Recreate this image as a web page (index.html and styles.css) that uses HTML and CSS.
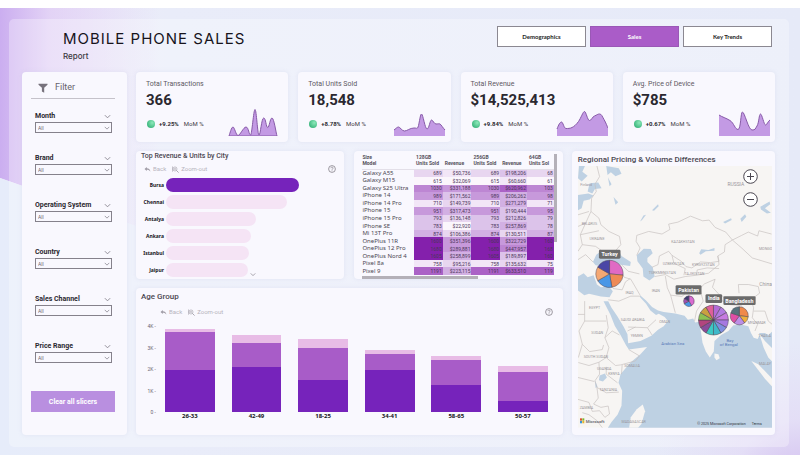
FILE: index.html
```html
<!DOCTYPE html>
<html lang="en">
<head>
<meta charset="utf-8">
<title>Mobile Phone Sales Report</title>
<link rel="stylesheet" href="styles.css">
</head>
<body>
<svg class="defs" width="0" height="0" aria-hidden="true">
  <defs>
    <symbol id="chev" viewBox="0 0 8 5"><path d="M1 1l3 3 3-3" fill="none" stroke="currentColor" stroke-width="1"/></symbol>
    <symbol id="back" viewBox="0 0 8 8"><path d="M3.2 1L.6 3.4l2.6 2.4V4.3c2 0 3.2.5 4 2.4 0-2.700-1.500-4.200-4-4.200z" fill="currentColor"/></symbol>
    <symbol id="zoomout" viewBox="0 0 8 8"><path d="M5 5l2.500 2.500M2 3.400h2.600" stroke="currentColor" fill="none"/><circle cx="3.400" cy="3.400" r="2.300" fill="none" stroke="currentColor" stroke-width=".7"/><path d="M.5 .5v6" stroke="currentColor" stroke-width=".7"/></symbol>
    <symbol id="help" viewBox="0 0 8 8"><circle cx="4" cy="4" r="3.400" fill="none" stroke="currentColor" stroke-width=".8"/><path d="M2.900 3.200c0-1.500 2.300-1.400 2.200 0C5 4 4 3.900 4 4.800M4 5.400v.8" fill="none" stroke="currentColor" stroke-width=".7"/></symbol>
    <radialGradient id="dot" cx=".65" cy=".35" r=".8"><stop offset="0" stop-color="#8ce8b9"/><stop offset="1" stop-color="#2fae74"/></radialGradient>
    <symbol id="orb" viewBox="0 0 8 8"><circle cx="4" cy="4" r="4" fill="url(#dot)"/></symbol>
    <path id="wedge" d="M0 0V-45A45 45 0 0 1 22.500 -38.970Z"/>
  </defs>
</svg>
<main class="canvas">
  <div class="panel">
    <header class="top">
      <div>
        <h1>MOBILE PHONE SALES</h1>
        <p class="subtitle">Report</p>
      </div>
      <nav class="tabs">
        <button type="button">Demographics</button>
        <button type="button" class="active">Sales</button>
        <button type="button">Key Trends</button>
      </nav>
    </header>

    <div class="layout">
      <aside class="card sidebar">
        <div class="filter-head">
          <h2><svg viewBox="0 0 10 10" aria-hidden="true"><path d="M.5 .7h9v1L6.200 4.800V9.800L3.900 8.400V4.800L.5 1.700z" fill="#77727c"/></svg>Filter</h2>
          <div class="field">
            <label for="month">Month</label><svg class="chev"><use href="#chev"/></svg>
            <div class="select"><select id="month"><option>All</option></select><svg class="chev"><use href="#chev"/></svg></div>
          </div>
        </div>
        <div class="fields">
          <div class="field">
            <label for="brand">Brand</label><svg class="chev"><use href="#chev"/></svg>
            <div class="select"><select id="brand"><option>All</option></select><svg class="chev"><use href="#chev"/></svg></div>
          </div>
          <div class="field">
            <label for="os">Operating System</label><svg class="chev"><use href="#chev"/></svg>
            <div class="select"><select id="os"><option>All</option></select><svg class="chev"><use href="#chev"/></svg></div>
          </div>
          <div class="field">
            <label for="country">Country</label><svg class="chev"><use href="#chev"/></svg>
            <div class="select"><select id="country"><option>All</option></select><svg class="chev"><use href="#chev"/></svg></div>
          </div>
          <div class="field">
            <label for="channel">Sales Channel</label><svg class="chev"><use href="#chev"/></svg>
            <div class="select"><select id="channel"><option>All</option></select><svg class="chev"><use href="#chev"/></svg></div>
          </div>
          <div class="field">
            <label for="price">Price Range</label><svg class="chev"><use href="#chev"/></svg>
            <div class="select"><select id="price"><option>All</option></select><svg class="chev"><use href="#chev"/></svg></div>
          </div>
        </div>
        <button type="button" class="clear">Clear all slicers</button>
      </aside>

      <div class="content">
        <section class="kpis">
          <article class="card kpi">
            <h3>Total Transactions</h3><strong>366</strong>
            <p><svg class="orb"><use href="#orb"/></svg><b>+9.25%</b><span>MoM %</span></p>
            <svg class="spark" viewBox="0 0 56 28"><path d="M2 28C3 25 4.500 19 6 19S9 27.500 11 27.500S16.500 19 19 19S22 27 23.500 27S26.500 1.500 28 1.500S30.500 27 32 27S34.500 10 36.700 10S39 19.500 40.700 19.500S43 10 45 10S49 25 50 28Z"/></svg>
          </article>
          <article class="card kpi">
            <h3>Total Units Sold</h3><strong>18,548</strong>
            <p><svg class="orb"><use href="#orb"/></svg><b>+8.78%</b><span>MoM %</span></p>
            <svg class="spark" viewBox="0 0 56 28"><path class="fill" d="M4 22C5.500 21 7 19 8.500 19S12 23 14.500 23S20 20 24 20S26 21 27.500 20S30 6 31.500 6S35 21 37 21S40 12 41.500 12S44 16 46 16S49 15.500 50 16S53 20 55 22V28H4Z"/><path class="line" d="M4 22C5.500 21 7 19 8.500 19S12 23 14.500 23S20 20 24 20S26 21 27.500 20S30 6 31.500 6S35 21 37 21S40 12 41.500 12S44 16 46 16S49 15.500 50 16S53 20 55 22"/></svg>
          </article>
          <article class="card kpi">
            <h3>Total Revenue</h3><strong>$14,525,413</strong>
            <p><svg class="orb"><use href="#orb"/></svg><b>+9.84%</b><span>MoM %</span></p>
            <svg class="spark" viewBox="0 0 56 28"><path class="fill" d="M5 21C6.500 17 8 14 9.500 14S12 20.500 14 20.500S18 20.500 20 19.500S24 17 26.500 13.500S31 3.500 32.500 3.500S35.500 12.500 37.500 12.500S40 9 42.500 8S45.500 6 47.500 6S50 8 52 11.500S55 18 56 20V28H5Z"/><path class="line" d="M5 21C6.500 17 8 14 9.500 14S12 20.500 14 20.500S18 20.500 20 19.500S24 17 26.500 13.500S31 3.500 32.500 3.500S35.500 12.500 37.500 12.500S40 9 42.500 8S45.500 6 47.500 6S50 8 52 11.500S55 18 56 20"/></svg>
          </article>
          <article class="card kpi">
            <h3>Avg. Price of Device</h3><strong>$785</strong>
            <p><svg class="orb"><use href="#orb"/></svg><b>+0.67%</b><span>MoM %</span></p>
            <svg class="spark" viewBox="0 0 56 28"><path class="fill" d="M5 7C8 9 12 10 16 12.500S21 21.500 24 21.500S26.500 4 28.500 4S34.500 22 38 22S41 21 43 18S45 6 46.500 6S50 17 51.500 17S54 13 56 12V28H5Z"/><path class="line" d="M5 7C8 9 12 10 16 12.500S21 21.500 24 21.500S26.500 4 28.500 4S34.500 22 38 22S41 21 43 18S45 6 46.500 6S50 17 51.500 17S54 13 56 12"/></svg>
          </article>
        </section>

        <div class="charts">
          <div class="left">
            <div class="pair">
              <section class="card city">
                <h3>Top Revenue &amp; Units by City</h3>
                <div class="tools"><button type="button"><svg><use href="#back"/></svg>Back</button><button type="button"><svg><use href="#zoomout"/></svg>Zoom-out</button><svg class="help"><use href="#help"/></svg></div>
                <ul class="bars">
                  <li><span>Bursa</span><div><i class="sel" style="width:78%"></i></div></li>
                  <li><span>Chennai</span><div><i style="width:71%"></i></div></li>
                  <li><span>Antalya</span><div><i style="width:53%"></i></div></li>
                  <li><span>Ankara</span><div><i style="width:50%"></i></div></li>
                  <li><span>Istanbul</span><div><i style="width:49%"></i></div></li>
                  <li><span>Jaipur</span><div><i style="width:48%"></i><svg class="chev"><use href="#chev"/></svg></div></li>
                </ul>
              </section>

              <section class="card matrix">
                <div class="clip">
                  <table>
                    <colgroup><col class="name"><col class="wide"><col class="wide"><col class="wide"><col class="slim"><col class="slim"></colgroup>
                    <thead><tr><th>Size<br>Model</th><th>128GB<br>Units Sold</th><th><br>Revenue</th><th>256GB<br>Units Sold</th><th><br>Revenue</th><th>64GB<br>Units Sol</th></tr></thead>
                    <tbody>
                      <tr><th>Galaxy A55</th><td class="l2">689</td><td class="l1">$50,736</td><td class="l2">689</td><td class="l3">$198,206</td><td class="l2">68</td></tr>
                      <tr><th>Galaxy M15</th><td class="l0">615</td><td class="l0">$32,069</td><td class="l0">615</td><td class="l1">$60,660</td><td class="l0">61</td></tr>
                      <tr><th>Galaxy S25 Ultra</th><td class="l6">1030</td><td class="l5">$331,188</td><td class="l6">1030</td><td class="l7">$620,962</td><td class="l6">103</td></tr>
                      <tr><th>iPhone 14</th><td class="l5">989</td><td class="l3">$171,562</td><td class="l5">989</td><td class="l4">$206,262</td><td class="l5">98</td></tr>
                      <tr><th>iPhone 14 Pro</th><td class="l1">710</td><td class="l2">$149,739</td><td class="l1">710</td><td class="l4">$271,279</td><td class="l1">71</td></tr>
                      <tr><th>iPhone 15</th><td class="l5">951</td><td class="l4">$317,473</td><td class="l5">951</td><td class="l3">$190,444</td><td class="l5">95</td></tr>
                      <tr><th>iPhone 15 Pro</th><td class="l3">793</td><td class="l2">$136,148</td><td class="l3">793</td><td class="l3">$212,826</td><td class="l3">79</td></tr>
                      <tr><th>iPhone SE</th><td class="l3">783</td><td class="l0">$22,920</td><td class="l3">783</td><td class="l4">$257,869</td><td class="l3">78</td></tr>
                      <tr><th>Mi 13T Pro</th><td class="l4">874</td><td class="l2">$106,386</td><td class="l4">874</td><td class="l2">$130,511</td><td class="l4">87</td></tr>
                      <tr><th>OnePlus 11R</th><td class="l8">1600</td><td class="l5">$351,396</td><td class="l8">1600</td><td class="l5">$322,729</td><td class="l8">160</td></tr>
                      <tr><th>OnePlus 12 Pro</th><td class="l8">1680</td><td class="l5">$289,881</td><td class="l8">1680</td><td class="l6">$447,957</td><td class="l8">168</td></tr>
                      <tr><th>OnePlus Nord 4</th><td class="l8">1605</td><td class="l4">$258,899</td><td class="l8">1605</td><td class="l3">$189,897</td><td class="l8">160</td></tr>
                      <tr><th>Pixel 8a</th><td class="l1">758</td><td class="l2">$95,216</td><td class="l1">758</td><td class="l2">$135,632</td><td class="l1">75</td></tr>
                      <tr><th>Pixel 9</th><td class="l7">1191</td><td class="l4">$223,115</td><td class="l7">1191</td><td class="l7">$633,510</td><td class="l7">119</td></tr>
                    </tbody>
                  </table>
                </div>
                <div class="vbar"></div>
                <div class="hbar"></div>
              </section>
            </div>

            <section class="card age">
              <h3>Age Group</h3>
              <div class="tools"><button type="button"><svg><use href="#back"/></svg>Back</button><button type="button"><svg><use href="#zoomout"/></svg>Zoom-out</button><svg class="help"><use href="#help"/></svg></div>
              <div class="plot">
                <div class="axis"><span>4K -</span><span>3K -</span><span>2K -</span><span>1K -</span><span>0 -</span></div>
                <div class="cols">
                  <div class="col"><div class="stack"><i class="c" style="height:3.500%"></i><i class="b" style="height:44%"></i><i class="a" style="height:49%"></i></div><span>26-33</span></div>
                  <div class="col"><div class="stack"><i class="c" style="height:10%"></i><i class="b" style="height:28%"></i><i class="a" style="height:52%"></i></div><span>42-49</span></div>
                  <div class="col"><div class="stack"><i class="c" style="height:10%"></i><i class="b" style="height:38%"></i><i class="a" style="height:37%"></i></div><span>18-25</span></div>
                  <div class="col"><div class="stack"><i class="c" style="height:5%"></i><i class="b" style="height:18%"></i><i class="a" style="height:49%"></i></div><span>34-41</span></div>
                  <div class="col"><div class="stack"><i class="c" style="height:5%"></i><i class="b" style="height:29%"></i><i class="a" style="height:31%"></i></div><span>58-65</span></div>
                  <div class="col"><div class="stack"><i class="c" style="height:7.500%"></i><i class="b" style="height:34%"></i><i class="a" style="height:12.500%"></i></div><span>50-57</span></div>
                </div>
              </div>
            </section>
          </div>

          <section class="card map">
            <h3>Regional Pricing &amp; Volume Differences</h3>
            <div class="mapbox">
              <svg viewBox="27 63 585 788" role="img" aria-label="Map of sales by country">
                <rect x="27" y="63" width="585" height="788" fill="#f7f5f3"/>
                <g fill="#bed1e3">
                  <path d="M117 851L128 834L146 812L158 785L160 740L149 716L155 690L185 655L215 630L235 608L180 616L172 604L155 572L138 545L125 512L104 470L118 470L128 490L145 515L165 548L176 570L178 597L215 590L248 574L268 556L285 546L298 530L288 518L270 508L262 512L245 498L232 478L214 458L214 452L232 468L250 488L268 498L285 503L320 507L348 514L358 526L374 522L380 534L392 532L397 560L402 595L412 622L424 640L436 622L438 590L458 572L480 560L495 543L520 541L540 546L548 566L556 580L568 584L574 572L580 590L586 610L600 640L612 652V851Z"/>
                  <path d="M572 566L590 590L612 612V562L600 572L590 566Z"/>
                  <path d="M204 332L225 312L246 313L252 326L236 340L236 352L252 368L258 396L242 408L224 396L222 372L206 350Z"/>
                  <path d="M72 352L82 330L98 318L110 328L128 320L150 318L158 334L186 352L184 364L150 360L110 366L80 362Z"/>
                  <path d="M27 396L44 386L56 398L74 392L84 420L96 428L120 426L132 440L122 458L96 456L60 448L46 452L27 438Z"/>
                  <path d="M30 63H48L40 80L56 92L38 110L27 100ZM112 63L150 70L158 86L140 94L126 82L116 90ZM62 115L88 113L98 130L78 132L70 146L56 140ZM117 97L128 118L122 124ZM134 156L148 172L140 180ZM27 150L58 146L74 152L62 164L44 168L38 190L27 196Z"/>
                  <path d="M392 326L398 314L420 316L438 310L438 318L412 320L396 330ZM214 230L224 212L232 210L220 226ZM250 196L268 178L270 184L256 198ZM464 232L488 220L490 226L470 236ZM516 222L530 208L534 216L520 232ZM576 186L604 170L606 178L590 190L608 204L596 206L578 194Z"/>
                  <path d="M92 694L108 688L114 700L102 712L90 708ZM78 708L86 728L80 732Z"/>
                </g>
                <g fill="#f7f5f3">
                  <path d="M181 851L186 820L204 796L222 781L229 802L218 840L208 851Z"/>
                  <path d="M438 628L450 630L454 642L444 648L438 640Z"/>
                  <path d="M549 650L570 660L612 704V728L590 704Z"/>
                </g>
                <g fill="none" stroke="#c6c0bd" stroke-width="2">
                  <path d="M84 63L92 95L78 118L82 140L68 160L66 200L90 220L96 240L120 260L152 275L156 300L140 318M27 210L60 200M27 245L50 235L66 200M50 235L34 270L40 300L27 320M34 270L90 258M40 300L80 305L98 318M27 345L50 330L72 352"/>
                  <path d="M204 332L214 310L202 290L204 272L240 260L280 268L304 254L300 238L328 232L366 214L402 228L422 226L440 248L472 262L492 286L470 300L468 322L448 334L452 350L426 354L396 352L370 370L352 366L338 350L310 332L300 320L272 334L268 360L250 368"/>
                  <path d="M492 286L520 272L540 262L568 274L572 258L610 268M492 286L520 310L552 340L612 358M258 396L290 390L316 404L350 396L384 392L420 386L452 360L448 334M310 332L316 356L350 372L346 392M384 392L386 376L416 370L452 372"/>
                  <path d="M158 360L178 380L212 388M150 372L166 398L186 404L214 452M132 432L160 436L170 412L184 402M118 466L150 470L186 455M186 455L215 455M290 394L296 430L306 452L320 505M306 452L340 456L366 434L394 432L408 418L440 404L432 428L452 450L480 464L520 470L548 466L574 446L570 426L540 420L510 420L512 446"/>
                  <path d="M394 432L404 470L384 500L378 530M452 450L462 470L480 480L520 484L526 510L516 540M548 466L556 490L552 520L568 540L560 560M556 500L590 500L600 530L612 540M178 548L236 550L262 526M236 550L250 572M176 560L200 548"/>
                  <path d="M47 470V530H112M47 510H27M47 530L30 560L40 600L28 640M112 512L118 550L108 580L120 610L112 640L140 664L156 662L200 650L212 635L180 616M108 580L130 560L152 572M40 600L62 622L100 616L104 602M28 655L60 664L90 654L112 640M90 654L92 690L78 710L84 730L112 746L150 744M112 668L112 690L146 716M84 730L88 762L74 780L96 790L118 786L122 810L108 820L92 800L70 802L60 775L27 766M60 812L84 830L100 851M60 812L40 806M160 662L158 690M27 700L76 712"/>
                </g>
                <g class="country">
                  <text x="477" y="123" class="big">RUSSIA</text><text x="34" y="122">Finland</text><text x="38" y="240">BELARUS</text><text x="62" y="285">UKRAINE</text>
                  <text x="308" y="295">KAZAKHSTAN</text><text x="572" y="315">MONGO</text><text x="282" y="360">UZBEKISTAN</text><text x="370" y="363">KYRGYZSTAN</text>
                  <text x="240" y="387">TURKMENISTAN</text><text x="348" y="390">TAJIKISTAN</text><text x="170" y="449">IRAQ</text><text x="249" y="444">IRAN</text><text x="573" y="425" class="big">China</text>
                  <text x="60" y="494">EGYPT</text><text x="156" y="529">SAUDI ARABIA</text><text x="272" y="535">OMAN</text><text x="67" y="569">SUDAN</text><text x="186" y="579">YEMEN</text>
                  <text x="44" y="642">SOUTH SUDAN</text><text x="166" y="668">SOMALIA</text><text x="84" y="678">UGANDA</text><text x="118" y="692">KENYA</text><text x="92" y="740">TANZANIA</text><text x="32" y="795">ZAMBIA</text>
                  <text x="158" y="838">MADAGASCAR</text><text x="570" y="577">THAILA</text><text x="572" y="663">MALAY</text><text x="538" y="539">MYANMAR</text>
                </g>
                <g class="sea"><text x="278" y="601">Arabian Sea</text><text x="474" y="593">Bay</text><text x="454" y="606">of Bengal</text></g>

                <g stroke="#4a4452" stroke-width="1.500">
                  <g transform="translate(122 388)">
                    <path fill="#e06ac4" d="M0 0V-41A41 41 0 0 1 40.800 3.600Z"/><path fill="#ef8a55" d="M0 0L40.800 3.600A41 41 0 0 1 7.100 40.400Z"/><path fill="#4a97e6" d="M0 0L7.100 40.400A41 41 0 0 1 -35.500 20.500Z"/><path fill="#f5a873" d="M0 0L-35.500 20.500A41 41 0 0 1 -35.500 -20.500Z"/><path fill="#4a47a6" d="M0 0L-35.500 -20.500A41 41 0 0 1 0 -41Z"/>
                  </g>
                  <g transform="translate(361 470)">
                    <path fill="#d86bd0" d="M0 0V-16A16 16 0 0 1 8 13.900Z"/><path fill="#4a97e6" d="M0 0L8 13.900A16 16 0 0 1 -13.900 8Z"/><path fill="#a04fb0" d="M0 0L-13.900 8A16 16 0 0 1 -13.900 -8Z"/><path fill="#3c3a70" d="M0 0L-13.900 -8A16 16 0 0 1 0 -16Z"/>
                  </g>
                  <g transform="translate(435 527)">
                    <use href="#wedge" fill="#b36bd6"/><use href="#wedge" fill="#b27be0" transform="rotate(30)"/><use href="#wedge" fill="#c77be0" transform="rotate(60)"/><use href="#wedge" fill="#a679e0" transform="rotate(90)"/><use href="#wedge" fill="#7f8fe0" transform="rotate(120)"/><use href="#wedge" fill="#3fb8c9" transform="rotate(150)"/><use href="#wedge" fill="#3cc9c4" transform="rotate(180)"/><use href="#wedge" fill="#8a4b9a" transform="rotate(210)"/><use href="#wedge" fill="#b3457e" transform="rotate(240)"/><use href="#wedge" fill="#8cc152" transform="rotate(270)"/><use href="#wedge" fill="#c9a040" transform="rotate(300)"/><use href="#wedge" fill="#e0609a" transform="rotate(330)"/>
                  </g>
                  <g transform="translate(513 514)">
                    <path fill="#f08a4b" d="M0 0V-27A27 27 0 0 1 26.800 3Z"/><path fill="#eeb03f" d="M0 0L26.800 3A27 27 0 0 1 15.900 21.800Z"/><path fill="#bd8fe6" d="M0 0L15.900 21.800A27 27 0 0 1 -15.900 21.800Z"/><path fill="#df4fa5" d="M0 0L-15.900 21.800A27 27 0 0 1 -25.700 -8.300Z"/><path fill="#56727c" d="M0 0L-25.700 -8.300A27 27 0 0 1 0 -27Z"/>
                  </g>
                </g>
                <g fill="#6b6b6b">
                  <rect x="90" y="315" width="65" height="27" rx="4"/><rect x="321" y="422" width="78" height="28" rx="4"/><rect x="411" y="449" width="50" height="27" rx="4"/><rect x="465" y="455" width="97" height="27" rx="4"/>
                </g>
                <g class="pin"><text x="122" y="335">Turkey</text><text x="360" y="442">Pakistan</text><text x="436" y="468">India</text><text x="513" y="475">Bangladesh</text></g>
                <g><rect x="33" y="823" width="6" height="7" fill="#d9532c"/><rect x="40" y="823" width="6" height="7" fill="#7db52c"/><rect x="33" y="831" width="6" height="7" fill="#3a97d8"/><rect x="40" y="831" width="6" height="7" fill="#e5b52e"/></g>
                <text class="ms" x="50" y="837">Microsoft</text>
                <text class="copy" x="386" y="844">© 2025 Microsoft Corporation</text><text class="copy" x="550" y="844">Terms</text>
              </svg>
              <div class="zoom">
                <button type="button" aria-label="Zoom in"><svg viewBox="0 0 15 15"><circle cx="7.500" cy="7.500" r="6.800"/><path d="M4 7.500h7M7.500 4v7"/></svg></button>
                <button type="button" aria-label="Zoom out"><svg viewBox="0 0 15 15"><circle cx="7.500" cy="7.500" r="6.800"/><path d="M4 7.500h7"/></svg></button>
              </div>
            </div>
          </section>
        </div>
      </div>
    </div>
  </div>
</main>
</body>
</html>
```
FILE: styles.css
```css
* { box-sizing: border-box; }
body { margin: 0; padding: 8px 0 3px; background: #fff; font-family: Roboto, "Liberation Sans", sans-serif; color: #2b2830; }
h1, h2, h3, p, ul { margin: 0; padding: 0; font-weight: 400; }
ul { list-style: none; }
button, select { font: inherit; color: inherit; margin: 0; padding: 0; border: 0; background: none; }
svg { display: block; }
i { display: block; }
.defs { position: absolute; }

.canvas {
  position: relative;
  padding: 11px 11px 8px 9px;
  background:
    radial-gradient(circle at 100% 108%, rgba(207, 184, 238, .95), rgba(226, 214, 245, .6) 70px, transparent 150px),
    linear-gradient(90deg, #f0edf7, #e9ecf9 170px, #e6eaf8);
}
.canvas::before {
  content: "";
  position: absolute;
  inset: 0;
  background: linear-gradient(90deg, #cbaef0, rgba(222, 200, 245, .7) 50px, rgba(240, 236, 248, 0) 160px);
  clip-path: polygon(0 0, 170px 0, 170px 230px, 0 170px);
}
.canvas::after {
  content: "";
  position: absolute;
  inset: 0;
  background: linear-gradient(90deg, #e6ecfa, #e9ecf9 170px);
  clip-path: polygon(0 170px, 170px 230px, 170px 100%, 0 100%);
}
.panel { position: relative; z-index: 1; padding: 0 14px 12px 13px; border-radius: 5px; background: rgba(255, 255, 255, .3); }

.top { display: flex; justify-content: space-between; align-items: flex-start; padding: 7px 3px 12px 41px; }
.top h1 { font: 400 15px/26px Inter, sans-serif; letter-spacing: 1px; color: #17141c; }
.subtitle { font: 500 8px/8px Inter, sans-serif; color: #3b3840; }
.tabs { display: flex; gap: 4px; }
.tabs button { width: 89px; height: 21px; border: 1px solid #8b8891; background: #fff; font: 700 6px/8px Lato, sans-serif; color: #222; }
.tabs .active { background: #aa5cc8; border-color: #9a58b6; color: #fff; }

.card { border-radius: 4px; background: #f9f8fe; box-shadow: 0 0 4px rgba(190, 196, 225, .3); }
.layout { display: grid; grid-template-columns: 105px minmax(0, 1fr); gap: 9px; }

.sidebar { padding: 10px 12px 0 9px; }
.sidebar h2 { display: flex; align-items: center; gap: 7px; height: 17px; padding: 0 0 5px 7px; border-bottom: 1px solid #c5c2ca; font-size: 9px; line-height: 11px; color: #66626c; }
.sidebar h2 svg { width: 10px; height: 10px; }
.field { display: grid; grid-template-columns: 1fr 8px; grid-template-rows: 8px 11px; align-items: center; row-gap: 2px; padding: 0 3px 0 4px; color: #85818b; }
.field label { font-size: 7px; line-height: 8px; font-weight: 700; color: #2b2830; white-space: nowrap; }
.field > .chev { width: 7px; height: 5px; }
.select { grid-column: 1 / 3; display: grid; grid-template-columns: 1fr 8px; align-items: center; }
.select select { grid-area: 1 / 1 / 2 / 3; width: 100%; height: 11px; padding: 0 2px; border: 1px solid #85818b; appearance: none; font-size: 5px; line-height: 6px; color: #6b6771; }
.select .chev { grid-area: 1 / 2; width: 6px; height: 4px; pointer-events: none; }
.filter-head .field { margin-top: 13px; }
.fields { display: grid; gap: 26px; padding-top: 21px; }
.clear { width: 100%; height: 21px; margin-top: 28px; background: #b98fe0; color: #fff; font-size: 7px; font-weight: 700; }

.content { display: grid; gap: 9px; min-width: 0; align-content: start; }
.kpis { display: grid; grid-template-columns: repeat(4, minmax(0, 1fr)); gap: 10px; }
.kpi { position: relative; height: 70px; padding: 7px 10px; }
.kpi h3 { font-size: 7px; line-height: 10px; color: #5d5963; }
.kpi strong { display: block; font-size: 15px; line-height: 22px; }
.kpi p { display: flex; align-items: center; height: 8px; margin-top: 9px; padding-left: 1px; font-size: 6px; line-height: 8px; }
.kpi .orb { width: 8px; height: 8px; margin-right: 4px; }
.kpi b { font-size: 6px; margin-right: 5px; }
.kpi span { color: #3c3942; }
.spark { position: absolute; right: 5px; bottom: 6px; width: 56px; height: 28px; fill: #c39ae4; stroke: #875aa8; stroke-width: 1; }
.spark .fill { stroke: none; }
.spark .line { fill: none; }

.charts { display: grid; grid-template-columns: 21fr 10fr; gap: 9px; }
.left { display: grid; gap: 9px; min-width: 0; grid-template-rows: auto 1fr; }
.pair { display: grid; grid-template-columns: minmax(0, 1fr) minmax(0, 1fr); gap: 10px; }
.tools { display: flex; align-items: center; gap: 6px; height: 8px; color: #a5a1ab; font-size: 6px; line-height: 8px; }
.tools button { display: flex; align-items: center; gap: 2px; color: #b7b4bd; }
.tools svg { width: 7px; height: 7px; color: #a09ca6; }
.tools .help { width: 8px; height: 8px; margin-left: auto; color: #858189; }

.city { padding: 0 8px 2px 5px; }
.city h3 { font-size: 7px; line-height: 10px; font-weight: 500; color: #4a4650; }
.city .tools { margin: 4px 0 5px; padding-left: 3px; }
.bars { display: grid; gap: 3px; }
.bars li { display: grid; grid-template-columns: 23px 1fr; gap: 2px; align-items: center; height: 14px; }
.bars span { font: 700 5px/8px "Noto Sans", sans-serif; text-align: right; color: #17141c; }
.bars div { display: flex; align-items: flex-end; gap: 2px; }
.bars i { height: 14px; border-radius: 7px; background: #f5e4f5; }
.bars .sel { background: #7623bb; }
.bars .chev { width: 6px; height: 5px; color: #8b8791; }

.matrix { display: grid; grid-template-columns: minmax(0, 1fr) 3px; grid-template-rows: 122px 3px; padding: 3px 6px 0 8px; align-content: start; }
.clip { overflow: hidden; }
.matrix table { width: 100%; height: 121px; table-layout: fixed; border-collapse: collapse; font-size: 5px; line-height: 6px; }
.name { width: 27%; }
.wide { width: 15%; }
.slim { width: 14%; }
.matrix thead th { height: 15px; padding: 0 0 2px 2px; border-bottom: 1px solid #e3dfe8; text-align: left; vertical-align: top; font-size: 5px; line-height: 6px; font-weight: 700; color: #56525c; white-space: nowrap; }
.matrix thead th:first-child { padding-left: 0; }
.matrix tbody th { padding: 0; text-align: left; font: 400 6px/7px "Noto Sans", sans-serif; color: #4b4751; white-space: nowrap; }
.matrix td { padding: 0 1px 0 0; text-align: right; color: #4a3658; }
.vbar { height: 88px; background: #b4b0b8; }
.hbar { width: 116px; height: 3px; background: #b4b0b8; }
.l0 { background: #fbf6fc; } .l1 { background: #f2e6f7; } .l2 { background: #e8d6f0; }
.l3 { background: #dcc3ea; } .l4 { background: #d2b0e3; } .l5 { background: #c799db; }
.l6 { background: #bd86d3; } .l7 { background: #ab62c6; } .l8 { background: #8420ac; }

.age { padding: 4px 10px 14px 5px; }
.age h3, .map h3 { font-size: 8px; line-height: 10px; color: #4a4650; font-weight: 500; }
.age .tools { margin: 6px 0 7px; padding-left: 19px; }
.plot { display: grid; grid-template-columns: 15px 1fr; gap: 9px; padding-right: 5px; }
.axis { display: flex; flex-direction: column; justify-content: space-between; height: 92px; font-size: 5px; line-height: 6px; text-align: right; color: #6b6771; white-space: nowrap; }
.cols { display: flex; justify-content: space-between; padding-top: 3px; }
.col { flex: 0 0 13%; font: 700 6px/9px "Noto Sans", sans-serif; text-align: center; color: #17141c; }
.stack { display: flex; flex-direction: column; justify-content: flex-end; height: 86px; }
.stack .a { background: #7623bb; }
.stack .b { background: #a85cc8; }
.stack .c { background: #e8bce6; }

.map { padding: 4px 3px 5px 6px; }
.map h3 { padding-bottom: 1px; white-space: nowrap; }
.mapbox { position: relative; }
.mapbox > svg { width: 100%; height: auto; }
.country text { font-size: 11px; fill: #9a959a; }
.country .big { font-size: 15px; }
.sea { font-size: 13px; fill: #587ab8; }
.pin { font-size: 16px; font-weight: 700; fill: #fff; text-anchor: middle; }
.ms { font-size: 13px; font-weight: 700; fill: #77737b; }
.copy { font-size: 11px; fill: #2f3540; }
.zoom { position: absolute; top: 3px; right: 14px; display: grid; gap: 8px; }
.zoom svg { width: 15px; height: 15px; fill: #fff; stroke: #4a4650; }
```
